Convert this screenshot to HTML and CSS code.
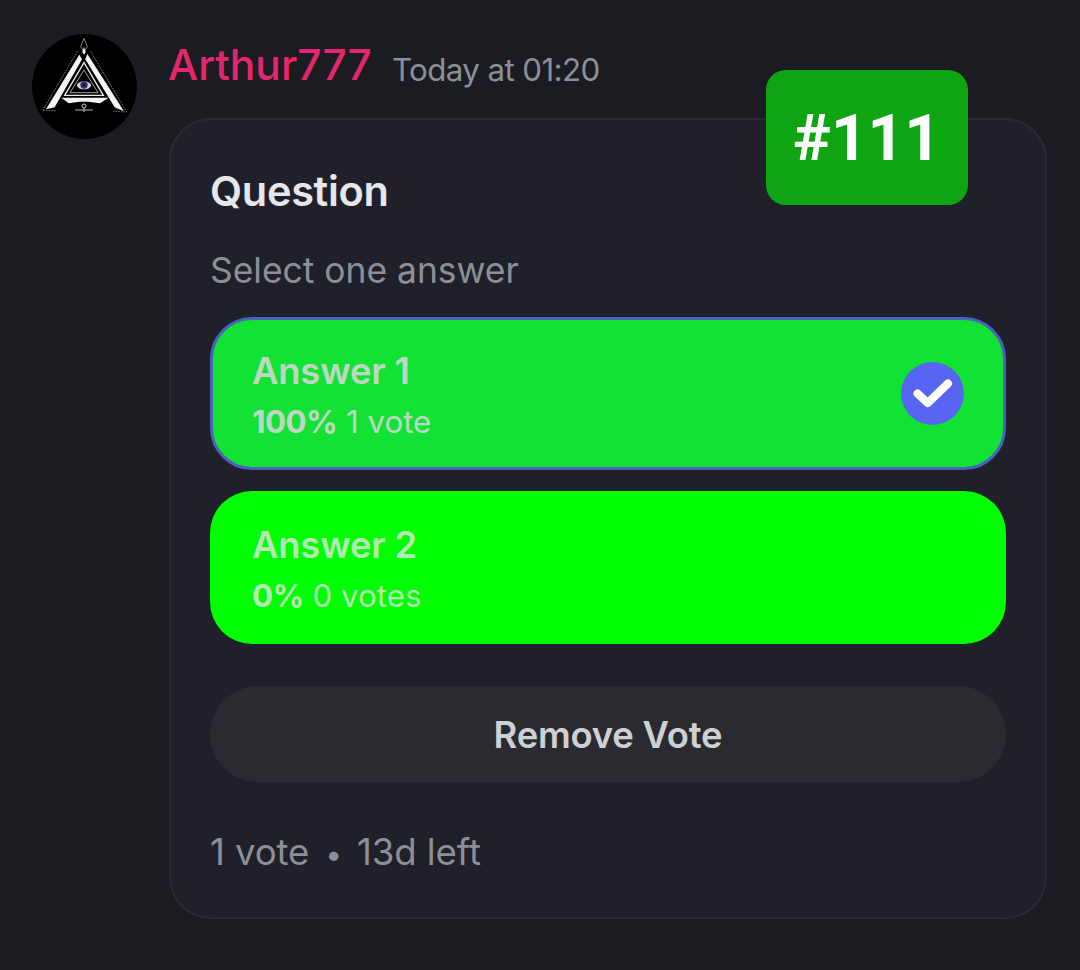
FILE: index.html
```html
<!DOCTYPE html>
<html lang="en">
<head>
<meta charset="utf-8">
<title>Poll</title>
<link rel="stylesheet" href="styles.css">
</head>
<body>
<main class="message">
  <div class="avatar">
    <svg viewBox="36 42 315 315" width="105" height="105" aria-hidden="true">
      <circle cx="193.5" cy="199.5" r="157.5" fill="#000"/>
      <path d="M192 55 L202 80 L192 96 L182 80 Z" fill="none" stroke="#bdbdb8" stroke-width="2"/>
      <path d="M192 80 L197 96 L192 104 L187 96 Z" fill="#eeeeea"/>
      <path d="M178 104 L186 118 L104 262 L78 268 Z" fill="#f4f4f0"/>
      <path d="M202 102 L312 274 L284 262 L196 118 Z" fill="#f4f4f0"/>
      <path d="M172 94 L68 272 L108 272" fill="none" stroke="#aaa" stroke-width="2" stroke-dasharray="5 3"/>
      <path d="M212 94 L320 276 L280 274" fill="none" stroke="#aaa" stroke-width="2" stroke-dasharray="5 3"/>
      <path d="M192 128 L134 226 L250 226 Z" fill="none" stroke="#e8e8e4" stroke-width="4"/>
      <path d="M192 150 L150 218 L234 218 Z" fill="none" stroke="#bbb" stroke-width="2.5"/>
      <path d="M124 233 H266 L240 250 L206 245 H178 L146 250 Z" fill="#f4f4f0"/>
      <ellipse cx="192" cy="196" rx="21" ry="12" fill="#cfcfd8"/>
      <circle cx="192" cy="195" r="11" fill="#3a2a6e"/>
      <circle cx="192" cy="195" r="4" fill="#15102e"/>
      <circle cx="192" cy="258" r="6" fill="none" stroke="#ccc" stroke-width="3"/>
      <path d="M166 270 H218 M192 264 V276" stroke="#bbb" stroke-width="3"/>
    </svg>
  </div>
  <div class="content">
    <header class="meta">
      <span class="name">Arthur777</span>
      <span class="time">Today at 01:20</span>
    </header>
    <section class="poll">
      <h1 class="question">Question</h1>
      <p class="hint">Select one answer</p>
      <div class="answers">
        <div class="answer answer-selected">
          <div>
            <div class="answer-title">Answer 1</div>
            <div class="answer-stat"><b>100%</b> 1 vote</div>
          </div>
          <span class="check">
            <svg viewBox="0 0 63 63" width="63" height="63" aria-hidden="true">
              <path d="M16.5 31.5 L26.7 41 L47 21.5" fill="none" stroke="#fff" stroke-width="8" stroke-linecap="round" stroke-linejoin="round"/>
            </svg>
          </span>
        </div>
        <div class="answer answer-plain">
          <div>
            <div class="answer-title">Answer 2</div>
            <div class="answer-stat"><b>0%</b> 0 votes</div>
          </div>
        </div>
      </div>
      <button class="remove" type="button">Remove Vote</button>
      <footer class="summary">1 vote<span class="dot">•</span>13d left</footer>
    </section>
  </div>
</main>
<div class="badge">#111</div>
</body>
</html>
```
FILE: styles.css
```css
* { box-sizing: border-box; }
html, body { margin: 0; height: 100%; }
body {
  background: #1b1c21;
  font-family: "Inter", "Noto Sans", sans-serif;
  overflow: hidden;
  position: relative;
}
.message {
  display: flex;
  gap: 32px;
  padding: 34px 33px 0 32px;
}
.avatar { width: 105px; height: 105px; flex: none; }
.avatar svg { display: block; }
.content { flex: 1; min-width: 0; margin-left: -1px; }
.meta {
  display: flex;
  align-items: baseline;
  gap: 20px;
  height: 84px;
  line-height: 62px;
}
.name { color: #e3266d; font-size: 42.5px; font-weight: 500; }
.time { color: #8d8f98; font-size: 31.3px; letter-spacing: -0.6px; position: relative; top: 1px; }
.poll {
  height: 801px;
  margin-left: 1px;
  background: #1f2029;
  border: 2px solid #2a2b32;
  border-radius: 42px;
  padding: 43px 39px 0;
}
.question {
  margin: 0;
  color: #e6e7ea;
  font-size: 41.5px;
  font-weight: 600;
  line-height: 56px;
  letter-spacing: -0.3px;
}
.hint {
  margin: 29px 0 0;
  color: #8d8f98;
  font-size: 35.4px;
  line-height: 46px;
}
.answers { display: flex; flex-direction: column; gap: 21px; margin-top: 23px; }
.answer {
  height: 153px;
  border-radius: 42px;
  padding: 0 42px;
  display: flex;
  align-items: center;
  justify-content: space-between;
  color: #c0d6c4;
}
.answer-selected {
  background: #12e234;
  border: 3px solid #4a62bd;
  padding: 0 39px;
}
.answer-plain { background: #00ff00; color: #b4e8b4; }
.answer-title { font-size: 36.4px; font-weight: 600; line-height: 50px; letter-spacing: -0.2px; margin-top: 2px; }
.answer-stat { font-size: 31.3px; line-height: 42px; margin-top: 5px; }
.answer-stat b { font-weight: 700; letter-spacing: -0.6px; }
.check {
  width: 63px;
  height: 63px;
  border-radius: 50%;
  background: #5865f2;
  flex: none;
}
.check svg { display: block; }
.remove {
  display: block;
  width: 100%;
  height: 96px;
  margin-top: 42px;
  padding: 2px 0 0;
  border: 0;
  border-radius: 48px;
  background: #2a2b31;
  color: #cfd0d4;
  font: 600 36.4px/1 "Inter", "Noto Sans", sans-serif;
  letter-spacing: -0.2px;
}
.summary {
  margin-top: 45px;
  color: #8d8f98;
  font-size: 36.6px;
  line-height: 50px;
  letter-spacing: -0.1px;
}
.dot { margin: 0 15px 0 16px; font-size: 30px; line-height: 40px; }
.badge {
  position: absolute;
  left: 766px;
  top: 70px;
  width: 202px;
  height: 135px;
  border-radius: 20px;
  background: #0fa512;
  color: #fff;
  font: 700 64px/137px "Roboto", sans-serif;
  text-align: center;
}
```
